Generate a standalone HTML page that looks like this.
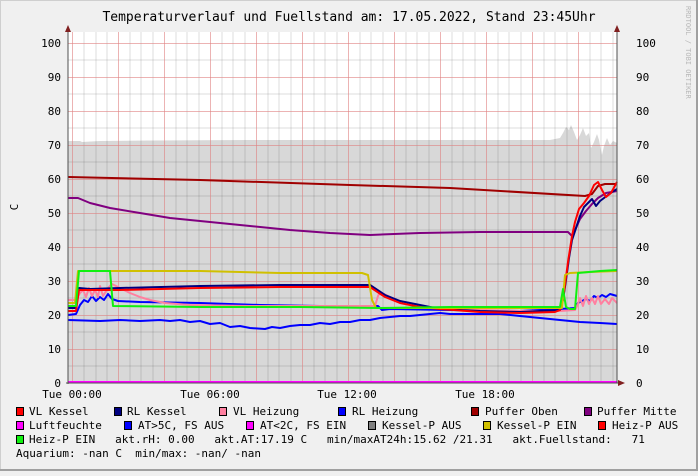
<!DOCTYPE html>
<html><head><meta charset="utf-8"><style>
html,body{margin:0;padding:0;background:#f0f0f0;}
svg text{font-family:"DejaVu Sans Mono","Liberation Mono",monospace;fill:#000;}
.pre text{white-space:pre;}
</style></head><body>
<svg width="698" height="471" xmlns="http://www.w3.org/2000/svg">
<rect x="0" y="0" width="698" height="471" fill="#f0f0f0"/>
<rect x="0" y="0" width="698" height="471" fill="none" stroke="#cfcfcf" stroke-width="2"/>
<line x1="697" y1="0" x2="697" y2="471" stroke="#a0a0a0" stroke-width="2"/>
<line x1="0" y1="470" x2="698" y2="470" stroke="#a0a0a0" stroke-width="2"/>
<text x="349" y="21" font-size="13" text-anchor="middle">Temperaturverlauf und Fuellstand am: 17.05.2022, Stand 23:45Uhr</text>
<text transform="translate(686,6) rotate(90)" font-size="7" style="fill:#b8b8b8">RRDTOOL / TOBI OETIKER</text>
<rect x="68" y="32" width="549" height="351" fill="#fff"/>
<path d="M68,141 L80,141 L82,142 L100,141 L150,140.5 L250,140 L350,140 L450,140 L550,140 L560,138 L563,133 L566,127 L569,130 L571,125 L574,132 L577,140 L580,135 L583,128 L586,136 L589,133 L591,148 L594,142 L597,134 L599,140 L602,155 L604,146 L607,138 L610,145 L613,141 L617,143 L617,383 L68,383 Z" fill="#d8d8d8"/>
<g stroke="#000" stroke-opacity="0.13" stroke-width="1">
<path d="M84,32V383M96,32V383M107,32V383M130,32V383M141,32V383M153,32V383M176,32V383M187,32V383M199,32V383M222,32V383M233,32V383M245,32V383M268,32V383M279,32V383M291,32V383M314,32V383M325,32V383M337,32V383M360,32V383M371,32V383M383,32V383M406,32V383M417,32V383M429,32V383M452,32V383M463,32V383M475,32V383M498,32V383M509,32V383M521,32V383M544,32V383M555,32V383M567,32V383M590,32V383M601,32V383M613,32V383"/>
<path d="M68,366H617M68,332H617M68,298H617M68,264H617M68,230H617M68,196H617M68,162H617M68,128H617M68,94H617M68,60H617"/>
</g>
<g stroke="#e08080" stroke-opacity="0.6" stroke-width="1">
<path d="M72.5,32V383M118.5,32V383M164.5,32V383M210.5,32V383M256.5,32V383M302.5,32V383M348.5,32V383M394.5,32V383M440.5,32V383M486.5,32V383M532.5,32V383M578.5,32V383"/>
<path d="M68,349.5H617M68,315.5H617M68,281.5H617M68,247.5H617M68,213.5H617M68,179.5H617M68,145.5H617M68,111.5H617M68,77.5H617M68,43.5H617"/>
</g>
<g fill="none" stroke-width="2" stroke-linejoin="round">
<polyline stroke="#a00000" points="68,177 200,180 350,185 450,188 585,196 592,194 598,186 605,184 617,184"/>
<polyline stroke="#800080" points="68,198 78,198 90,203 110,208 140,213 170,218 210,222 250,226 290,230 330,233 370,235 420,233 480,232 568,232 572,236 576,228 580,219 586,211 592,204 598,198 606,193 617,191"/>
<polyline stroke="#0000ff" points="68,320 100,321 120,320 140,321 160,320 170,321 180,320 190,322 200,321 210,324 220,323 230,327 240,326 250,328 265,329 272,327 280,328 290,326 300,325 310,325 320,323 330,324 340,322 350,322 360,320 370,320 380,318 390,317 400,316 410,316 420,315 430,314 440,313 450,314 470,314 500,314 520,316 540,318 560,320 580,322 600,323 617,324"/>
<polyline stroke="#0000ff" points="68,315 76,314 80,305 84,300 88,302 92,296 96,301 100,297 104,300 108,294 112,299 118,301 140,302 200,303 260,305 320,306 370,306 378,306 382,310 390,309 450,310 520,311 560,309 575,308 578,303 582,301 586,299 590,301 594,296 598,298 602,295 606,297 610,294 617,296"/>
<polyline stroke="#ff80a0" points="68,300 76,300 80,293 83,290 86,297 89,288 92,296 95,290 98,297 100,286 103,296 108,288 112,284 120,288 130,293 140,297 150,300 165,303 190,305 250,306 300,306 375,306 378,296 380,292 390,297 400,301 420,306 440,308 480,310 520,311 560,311 575,310 578,304 580,298 583,306 586,296 589,304 592,298 595,304 598,296 601,304 605,299 609,304 612,298 617,303"/>
<polyline stroke="#000080" points="68,308 76,308 79,288 90,289 120,288 200,286 280,285 370,285 376,289 385,295 400,301 420,305 440,309 480,311 520,312 560,310 563,300 566,280 569,258 572,240 576,228 580,216 584,207 588,203 592,199 596,206 600,201 604,198 608,195 612,192 617,189"/>
<polyline stroke="#ff0000" points="68,311 76,311 79,290 90,290 120,290 200,288 280,287 370,287 376,291 385,297 400,303 420,307 440,309 480,312 520,313 555,312 560,310 564,292 568,262 572,236 575,222 579,209 584,203 589,196 594,185 598,182 602,190 606,197 611,193 617,182"/>
<polyline stroke="#d0c000" points="68,303 75,303 78,271 100,271 120,271 200,271 280,273 362,273 368,275 372,300 376,308 440,308 555,308 562,308 565,275 570,273 590,272 617,271"/>
<polyline stroke="#10f010" points="68,306 76,306 79,271 110,271 113,306 200,307 300,307 380,308 450,307 555,307 560,307 563,289 566,307 570,309 575,309 578,273 600,271 617,270"/>
<line x1="68" y1="382" x2="617" y2="382" stroke="#ff00ff"/>
</g>
<line x1="68" y1="30" x2="68" y2="384" stroke="#505050"/>
<path d="M68,25 L65,32 L71,32 Z" fill="#802020"/>
<line x1="617" y1="32" x2="617" y2="383" stroke="#505050"/>
<path d="M617,25 L614,32 L620,32 Z" fill="#802020"/>
<line x1="66" y1="383" x2="620" y2="383" stroke="#505050"/>
<path d="M625,383 L618,380 L618,386 Z" fill="#802020"/>
<g font-size="11" text-anchor="end">
<text x="61" y="47">100</text><text x="61" y="81">90</text><text x="61" y="115">80</text><text x="61" y="149">70</text><text x="61" y="183">60</text><text x="61" y="217">50</text><text x="61" y="251">40</text><text x="61" y="285">30</text><text x="61" y="319">20</text><text x="61" y="353">10</text><text x="61" y="387">0</text>
</g>
<g font-size="11">
<text x="636" y="47">100</text><text x="636" y="81">90</text><text x="636" y="115">80</text><text x="636" y="149">70</text><text x="636" y="183">60</text><text x="636" y="217">50</text><text x="636" y="251">40</text><text x="636" y="285">30</text><text x="636" y="319">20</text><text x="636" y="353">10</text><text x="636" y="387">0</text>
</g>
<text transform="translate(18,207) rotate(-90)" font-size="11" text-anchor="middle">C</text>
<g font-size="11" text-anchor="middle">
<text x="72" y="398">Tue 00:00</text><text x="210" y="398">Tue 06:00</text><text x="347" y="398">Tue 12:00</text><text x="485" y="398">Tue 18:00</text>
</g>
<g stroke="#000" stroke-width="1">
<rect x="16.5" y="407.5" width="7" height="8" fill="#ff0000"/>
<rect x="114.5" y="407.5" width="7" height="8" fill="#000080"/>
<rect x="219.5" y="407.5" width="7" height="8" fill="#ff80a0"/>
<rect x="338.5" y="407.5" width="7" height="8" fill="#0000ff"/>
<rect x="471.5" y="407.5" width="7" height="8" fill="#a00000"/>
<rect x="584.5" y="407.5" width="7" height="8" fill="#800080"/>
<rect x="16.5" y="421.5" width="7" height="8" fill="#ff00ff"/>
<rect x="124.5" y="421.5" width="7" height="8" fill="#0000ff"/>
<rect x="246.5" y="421.5" width="7" height="8" fill="#ff00ff"/>
<rect x="368.5" y="421.5" width="7" height="8" fill="#808080"/>
<rect x="483.5" y="421.5" width="7" height="8" fill="#d0c000"/>
<rect x="598.5" y="421.5" width="7" height="8" fill="#ff0000"/>
<rect x="16.5" y="435.5" width="7" height="8" fill="#10f010"/>
</g>
<g font-size="11" class="pre">
<text x="29" y="415">VL Kessel</text>
<text x="127" y="415">RL Kessel</text>
<text x="233" y="415">VL Heizung</text>
<text x="352" y="415">RL Heizung</text>
<text x="485" y="415">Puffer Oben</text>
<text x="597" y="415">Puffer Mitte</text>
<text x="29" y="429">Luftfeuchte</text>
<text x="138" y="429">AT&gt;5C, FS AUS</text>
<text x="260" y="429">AT&lt;2C, FS EIN</text>
<text x="382" y="429">Kessel-P AUS</text>
<text x="497" y="429">Kessel-P EIN</text>
<text x="612" y="429">Heiz-P AUS</text>
<text x="29" y="443">Heiz-P EIN   akt.rH: 0.00   akt.AT:17.19 C   min/maxAT24h:15.62 /21.31   akt.Fuellstand:   71</text>
<text x="16" y="457">Aquarium: -nan C  min/max: -nan/ -nan</text>
</g>
</svg>
</body></html>
